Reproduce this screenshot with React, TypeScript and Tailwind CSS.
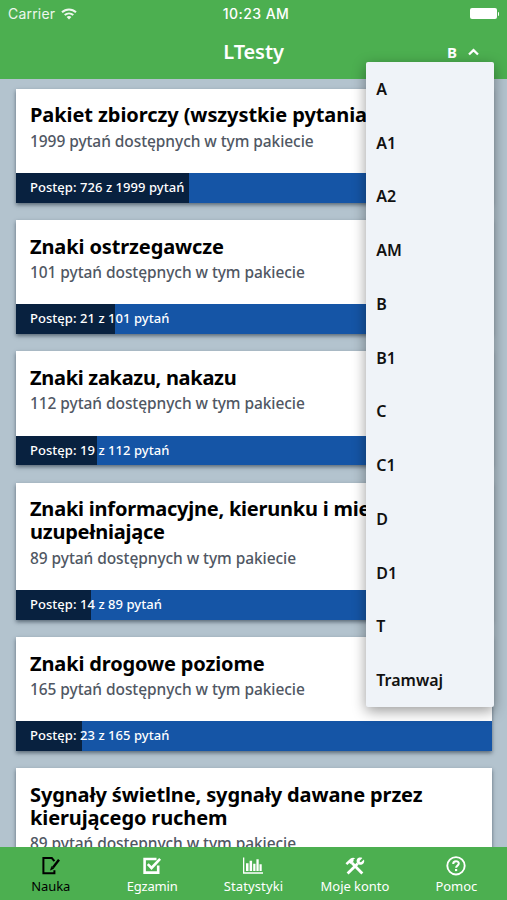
import React, { useState } from 'react';
import clsx from 'clsx';

interface Pack {
  title: string;
  titleClass: string;
  total: number;
  done: number;
  barWidth: number;
}

const packs: Pack[] = [
  { title: 'Pakiet zbiorczy (wszystkie pytania)', titleClass: 'tracking-[-0.08px] whitespace-nowrap', total: 1999, done: 726, barWidth: 173.5 },
  { title: 'Znaki ostrzegawcze', titleClass: 'tracking-[-0.12px]', total: 101, done: 21, barWidth: 99.5 },
  { title: 'Znaki zakazu, nakazu', titleClass: 'tracking-[-0.3px]', total: 112, done: 19, barWidth: 81 },
  { title: 'Znaki informacyjne, kierunku i miejscowości, uzupełniające', titleClass: 'tracking-[-0.22px]', total: 89, done: 14, barWidth: 75.5 },
  { title: 'Znaki drogowe poziome', titleClass: 'tracking-[-0.14px]', total: 165, done: 23, barWidth: 66.5 },
  { title: 'Sygnały świetlne, sygnały dawane przez kierującego ruchem', titleClass: 'tracking-[-0.12px]', total: 89, done: 10, barWidth: 54 },
];

const categories = ['A', 'A1', 'A2', 'AM', 'B', 'B1', 'C', 'C1', 'D', 'D1', 'T', 'Tramwaj'];

const NoteIcon = () => (
  <svg width="20" height="20" viewBox="0 0 20 20" fill="none" stroke="currentColor">
    <path d="M13.4 5.2 10.800 2H2.4v15.200h11v-3" strokeWidth="2" />
    <path d="M18 3.800 12 11.400" strokeWidth="2.4" />
    <path d="m10.600 10.600 2.200 1.800-3.400 1.800z" fill="currentColor" strokeWidth=".5" />
  </svg>
);

const CheckIcon = () => (
  <svg width="20" height="20" viewBox="0 0 20 20" fill="none" stroke="currentColor">
    <path d="M14.5 3H2.6v13.6h13.6V9.6" strokeWidth="2.6" />
    <path d="m5.8 8.2 3.7 3.8 8.6-9.2" strokeWidth="2.6" />
  </svg>
);

const ChartIcon = () => (
  <svg width="20" height="20" viewBox="0 0 20 20" fill="currentColor">
    <path d="M0 1.5h1.3v14.800H20v1.400H0z" />
    <path d="M3 7.300h2.500V15H3zM6.600 4.800h2.500V15H6.600zM10.200 7.800h2.300V15h-2.300zM13.400 3.300h2.300V15h-2.300zM16.500 8.300h2.200V15h-2.200z" />
  </svg>
);

const ToolsIcon = () => (
  <svg width="20" height="20" viewBox="0 0 20 20" fill="none" stroke="currentColor">
    <path d="m2.6 17.4 10.2-10" strokeWidth="2.8" />
    <path d="M17.4 2.1 14.5 5l.5.9 1 .3 3-2.8c.7 2.2-.1 4.4-2 5.1-1.5.6-3.2.2-4.3-1-1.1-1.1-1.4-2.6-.8-4 .8-1.8 3.2-2.4 5.5-1.4z" fill="currentColor" stroke="none" />
    <path d="M.5 7.300 5.300 2.700C6.800 1.500 8.700 1.400 10.400 2.200 8.800 2.700 8.100 3.600 8.700 5L5.800 7.900 4.400 6.900 2.300 9z" fill="currentColor" stroke="none" />
    <path d="m6.8 6.7 10.5 10.7" strokeWidth="2.8" />
  </svg>
);

const HelpIcon = () => (
  <svg width="20" height="20" viewBox="0 0 20 20" fill="none" stroke="currentColor">
    <circle cx="10" cy="9.800" r="8.700" strokeWidth="1.900" />
    <path d="M7.200 7.900C7.200 4.400 12.800 4.400 12.800 7.500c0 2.100-2.700 2.100-2.700 4.300" strokeWidth="2" />
    <path d="M10.100 13v2.100" strokeWidth="2.200" />
  </svg>
);

const tabs = [
  { label: 'Nauka', icon: NoteIcon, spacing: 'tracking-[-0.1px]' },
  { label: 'Egzamin', icon: CheckIcon, spacing: 'tracking-[-0.2px]' },
  { label: 'Statystyki', icon: ChartIcon, spacing: 'tracking-[0.1px]' },
  { label: 'Moje konto', icon: ToolsIcon, spacing: 'tracking-[-0.05px]' },
  { label: 'Pomoc', icon: HelpIcon, spacing: 'tracking-[-0.1px]' },
];

function StatusBar() {
  return (
    <div className="grid h-[27px] grid-cols-3 items-center px-2 font-['Inter',sans-serif] text-[14px]">
      <div className="flex items-center gap-1.5 text-white/90">
        <span className="tracking-[0.2px]">Carrier</span>
        <svg width="16" height="12" viewBox="0 0 16 12" fill="none" stroke="currentColor" strokeWidth="2">
          <path d="M1 4.3C5 .4 11 .4 15 4.3M3.7 7.1c2.5-2.3 6.1-2.3 8.6 0" />
          <path d="M5.6 9C7 7.7 9 7.7 10.4 9L8 11.5z" fill="currentColor" stroke="none" />
        </svg>
      </div>
      <div className="pl-[5px] text-center font-medium tracking-[0.45px]">10:23 AM</div>
      <div className="flex items-center justify-end gap-px">
        <div className="h-[11.5px] w-[27px] rounded-[2px] bg-white" />
        <div className="h-1 w-[1.5px] rounded-r bg-white" />
      </div>
    </div>
  );
}

function PackCard({ pack }: { pack: Pack }) {
  return (
    <div className="shrink-0 bg-white shadow-[0_2px_4px_rgba(30,45,60,0.6)]">
      <div className="px-[14.5px] pt-[14.5px] pb-[22.5px]">
        <h2 className={clsx('text-[20px] leading-[23.25px] font-bold text-black', pack.titleClass)}>{pack.title}</h2>
        <p className="mt-[4px] text-[15.5px] leading-5 font-medium tracking-[-0.07px] text-[#505763]">
          {pack.total} pytań dostępnych w tym pakiecie
        </p>
      </div>
      <div className="relative h-[29.75px] bg-[#1555a6]">
        <div className="h-full bg-[#08213f]" style={{ width: pack.barWidth }} />
        <span className="absolute inset-y-0 left-[14.5px] flex items-center text-[13px] font-medium tracking-[0.05px] text-white">
          Postęp: {pack.done} z {pack.total} pytań
        </span>
      </div>
    </div>
  );
}

export default function App() {
  const [activeTab, setActiveTab] = useState('Nauka');
  const [category, setCategory] = useState('B');
  const [menuOpen, setMenuOpen] = useState(true);

  return (
    <div className="relative flex h-screen flex-col overflow-hidden bg-[#b3c3ce] font-['Noto_Sans',sans-serif]">
      {/* Header */}
      <header className="h-[79px] shrink-0 bg-[#4caf50] text-white">
        <StatusBar />
        <div className="grid h-[50px] grid-cols-3 items-center">
          <h1 className="col-start-2 text-center text-[20px] font-semibold tracking-[-0.1px]">LTesty</h1>
          <button onClick={() => setMenuOpen(!menuOpen)} className="flex items-center justify-end gap-[11px] pr-7 text-[15px] font-bold">
            {category}
            <svg width="11" height="8" viewBox="0 0 11 8" fill="none" stroke="currentColor" strokeWidth="2.3">
              <path d="m1 6.5 4.5-4.4L10 6.5" />
            </svg>
          </button>
        </div>
      </header>

      {/* Question packs */}
      <main className="flex min-h-0 flex-1 flex-col gap-[17.25px] overflow-hidden pt-[9.75px] pr-[15px] pl-[15.5px]">
        {packs.map((pack) => (
          <PackCard key={pack.title} pack={pack} />
        ))}
      </main>

      {/* Category menu */}
      {menuOpen && (
        <ul className="absolute top-[62px] left-[366.25px] w-32 rounded-[2px] bg-[#eff3f8] shadow-[0_4px_14px_rgba(0,0,0,0.4)]">
          {categories.map((item) => (
            <li
              key={item}
              onClick={() => {
                setCategory(item);
                setMenuOpen(false);
              }}
              className="flex h-[53.75px] items-center pl-[10px] text-[16px] font-semibold text-[#111]"
            >
              {item}
            </li>
          ))}
        </ul>
      )}

      {/* Bottom tabs */}
      <nav className="grid h-[53.5px] shrink-0 grid-cols-5 bg-[#4caf50]">
        {tabs.map(({ label, icon: Icon, spacing }) => (
          <button
            key={label}
            onClick={() => setActiveTab(label)}
            className={clsx('flex flex-col items-center pt-[9px]', activeTab === label ? 'text-black' : 'text-white')}
          >
            <Icon />
            <span className={clsx('mt-[2px] text-[13px] leading-4 whitespace-nowrap', spacing)}>{label}</span>
          </button>
        ))}
      </nav>
    </div>
  );
}
